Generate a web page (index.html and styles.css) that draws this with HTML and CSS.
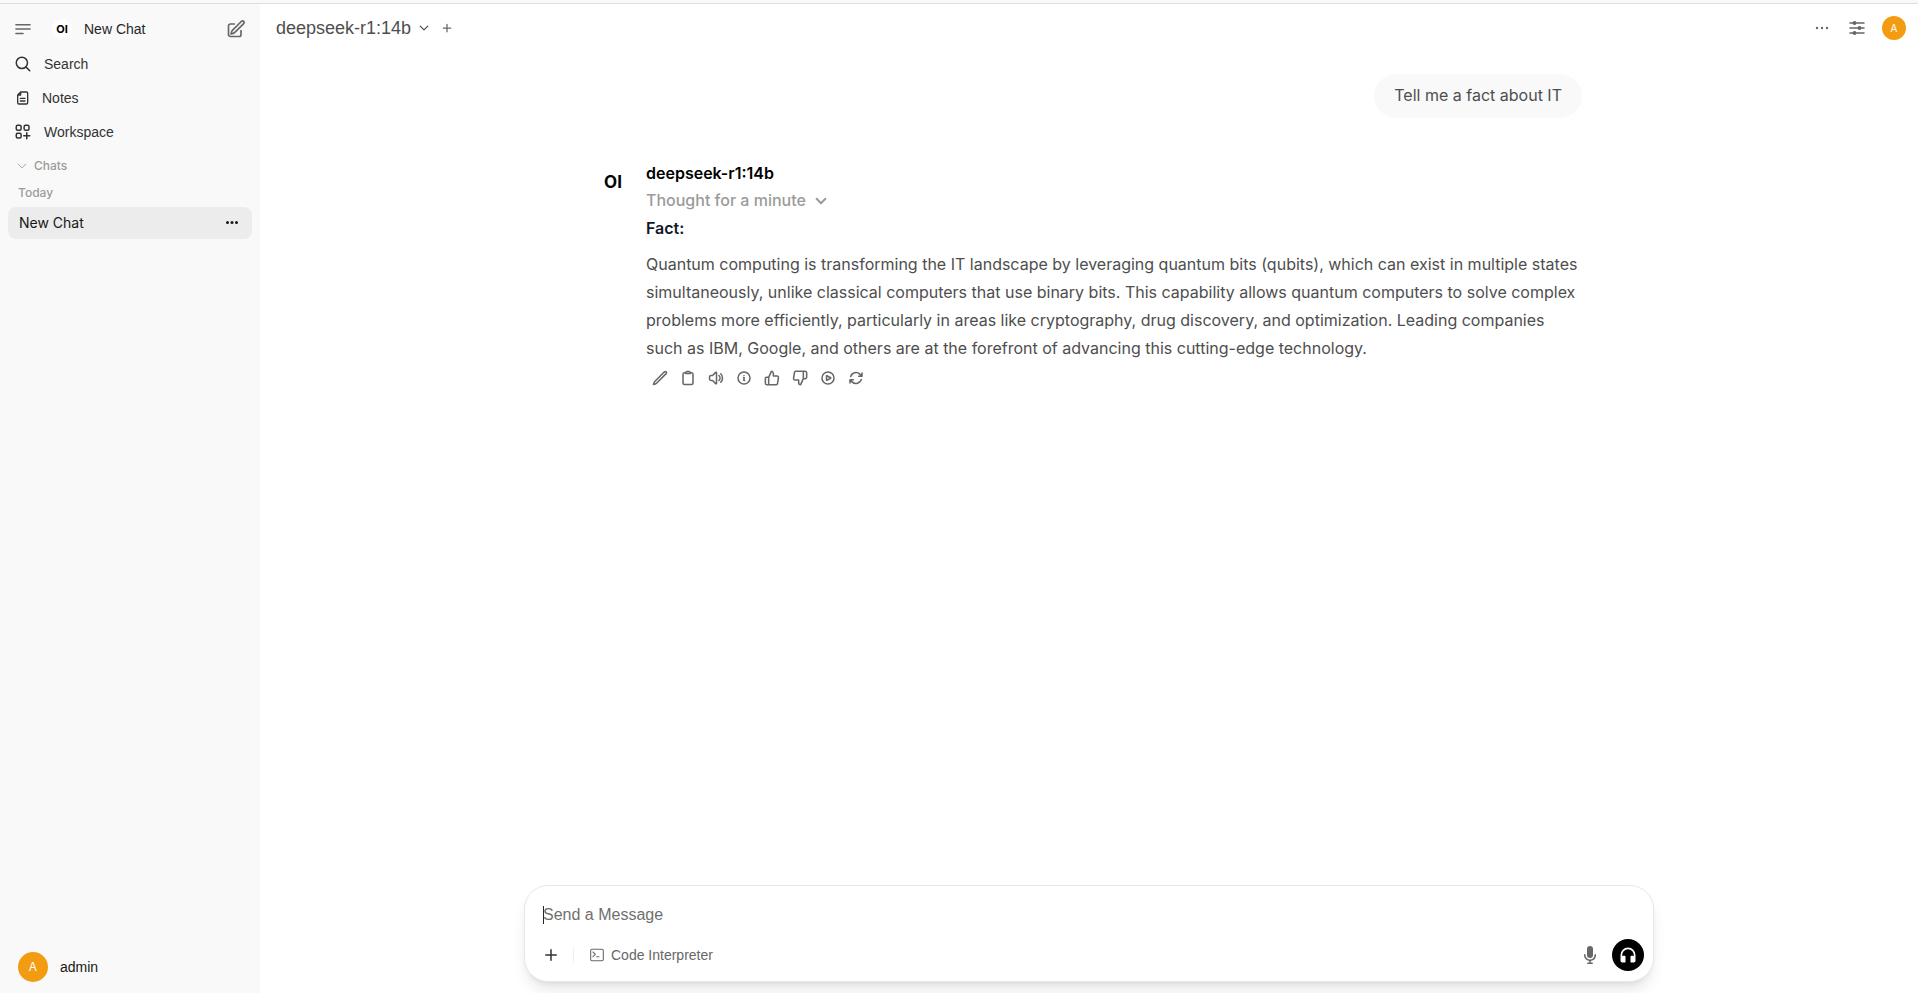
FILE: index.html
```html
<!doctype html>
<html lang="en">
<head>
    <meta charset="UTF-8" />
    <meta name="viewport" content="width=device-width, initial-scale=1">
    <title>New Chat</title>
    <link rel="stylesheet" href="styles.css">
</head>
<body>
<div class="app">
    <aside class="sidebar">
        <div class="side-top">
            <button type="button" class="icon-btn" aria-label="Toggle sidebar">
                <svg class="i20" viewBox="0 0 24 24" stroke-width="1.800"><path d="M3.500 6.750h17M3.500 12h17M3.500 17.250h8.500"/></svg>
            </button>
            <a href="#" class="new-chat">
                <span class="logo logo-small">OI</span>
                <span class="label">New Chat</span>
                <svg class="i20" viewBox="0 0 24 24" stroke-width="2"><path d="M16.862 4.487l1.687-1.688a1.875 1.875 0 112.652 2.652L10.582 16.07a4.5 4.5 0 01-1.897 1.13L6 18l.8-2.685a4.5 4.5 0 011.13-1.897l8.932-8.931zM18 14v4.75A2.25 2.25 0 0115.75 21H5.25A2.25 2.25 0 013 18.75V8.25A2.25 2.25 0 015.25 6H10"/></svg>
            </a>
        </div>
        <nav class="side-nav">
            <button type="button" class="nav-item">
                <svg class="i18" viewBox="0 0 24 24" stroke-width="2"><path d="m21 21-5.197-5.197m0 0A7.5 7.5 0 1 0 5.196 5.196a7.5 7.5 0 0 0 10.607 10.607Z"/></svg>
                Search
            </button>
            <a href="#" class="nav-item">
                <svg class="i16" viewBox="0 0 24 24" stroke-width="2"><path d="M10 3h8.500a2 2 0 0 1 2 2v14a2 2 0 0 1-2 2h-11a2 2 0 0 1-2-2V7.500zM10 3v4.500H5.500M9.500 12.500h7M9.500 16.500h7"/></svg>
                Notes
            </a>
            <a href="#" class="nav-item">
                <svg class="i18" viewBox="0 0 24 24" stroke-width="2"><rect x="3" y="3" width="6.500" height="6.500" rx="2"/><rect x="13.500" y="3" width="6.500" height="6.500" rx="2"/><rect x="3" y="13.500" width="6.500" height="6.500" rx="2"/><path d="M17 13v8M13 17h8"/></svg>
                Workspace
            </a>
        </nav>
        <button type="button" class="folder">
            <svg class="i12" viewBox="0 0 24 24" stroke-width="1.800"><path d="m19.500 8.250-7.500 7.500-7.500-7.500"/></svg>
            Chats
        </button>
        <div class="period">Today</div>
        <div class="chat-item">
            <a href="#">New Chat</a>
            <button type="button" class="icon-btn" aria-label="Chat menu">
                <svg class="i16 solid" viewBox="0 0 16 16"><circle cx="3.500" cy="7.500" r="1.500"/><circle cx="8" cy="7.500" r="1.500"/><circle cx="12.500" cy="7.500" r="1.500"/></svg>
            </button>
        </div>
        <button type="button" class="user">
            <span class="avatar avatar-large">A</span>
            admin
        </button>
    </aside>

    <main class="main">
        <header class="topbar">
            <button type="button" class="model">
                deepseek-r1:14b
                <svg class="i12" viewBox="0 0 24 24" stroke-width="2.500"><path d="m19.500 8.250-7.500 7.500-7.500-7.500"/></svg>
            </button>
            <button type="button" class="icon-btn add-model" aria-label="Add model">
                <svg class="i12" viewBox="0 0 24 24" stroke-width="2.500"><path d="M12 4.500v15M4.500 12h15"/></svg>
            </button>
            <div class="top-actions">
                <button type="button" class="icon-btn" aria-label="More">
                    <svg class="i20 solid" viewBox="0 0 20 20"><circle cx="5" cy="10" r="1.200"/><circle cx="10" cy="10" r="1.200"/><circle cx="15" cy="10" r="1.200"/></svg>
                </button>
                <button type="button" class="icon-btn" aria-label="Controls">
                    <svg class="i20" viewBox="0 0 24 24" stroke-width="1.600"><path d="M3.500 6h17M3.500 12h17M3.500 18h17"/><circle class="knob" cx="9" cy="6" r="1.500"/><circle class="knob" cx="15" cy="12" r="1.500"/><circle class="knob" cx="9" cy="18" r="1.500"/></svg>
                </button>
                <button type="button" class="avatar" aria-label="User menu">A</button>
            </div>
        </header>

        <section class="messages">
            <div class="question">Tell me a fact about IT</div>
            <article class="answer">
                <span class="logo">OI</span>
                <div class="answer-body">
                    <div class="name">deepseek-r1:14b</div>
                    <button type="button" class="thought">
                        Thought for a minute
                        <svg class="i14" viewBox="0 0 24 24" stroke-width="3.500"><path d="m19.500 8.250-7.500 7.500-7.500-7.500"/></svg>
                    </button>
                    <p class="fact"><strong>Fact:</strong></p>
                    <p>Quantum computing is transforming the IT landscape by leveraging quantum bits (qubits), which can exist in multiple states simultaneously, unlike classical computers that use binary bits. This capability allows quantum computers to solve complex problems more efficiently, particularly in areas like cryptography, drug discovery, and optimization. Leading companies such as IBM, Google, and others are at the forefront of advancing this cutting-edge technology.</p>
                    <div class="tools">
                        <button type="button" class="icon-btn" aria-label="Edit">
                            <svg class="i16" viewBox="0 0 24 24" stroke-width="2.300"><path d="M16.862 4.487l1.687-1.688a1.875 1.875 0 112.652 2.652L6.832 19.82a4.5 4.5 0 01-1.897 1.13l-2.685.8.8-2.685a4.5 4.5 0 011.13-1.897L16.863 4.487z"/></svg>
                        </button>
                        <button type="button" class="icon-btn" aria-label="Copy">
                            <svg class="i16" viewBox="0 0 24 24" stroke-width="2.300"><path d="M15.666 3.888A2.25 2.25 0 0013.5 2.25h-3c-1.03 0-1.9.693-2.166 1.638m7.332 0c.055.194.084.4.084.612v0a.75.75 0 01-.75.75H9a.75.75 0 01-.75-.75v0c0-.212.03-.418.084-.612m7.332 0c.646.049 1.288.11 1.927.184 1.1.128 1.907 1.077 1.907 2.185V19.5a2.25 2.25 0 01-2.25 2.25H6.75A2.25 2.25 0 014.5 19.5V6.257c0-1.108.806-2.057 1.907-2.185a48.208 48.208 0 011.927-.184"/></svg>
                        </button>
                        <button type="button" class="icon-btn" aria-label="Read aloud">
                            <svg class="i16" viewBox="0 0 24 24" stroke-width="2.300"><path d="M19.114 5.636a9 9 0 010 12.728M16.463 8.288a5.25 5.25 0 010 7.424M6.75 8.25l4.72-4.72a.75.75 0 011.28.53v15.88a.75.75 0 01-1.28.53l-4.72-4.72H4.51c-.88 0-1.704-.507-1.938-1.354A9.01 9.01 0 012.25 12c0-.83.112-1.633.322-2.396C2.806 8.756 3.63 8.25 4.51 8.25H6.75z"/></svg>
                        </button>
                        <button type="button" class="icon-btn" aria-label="Info">
                            <svg class="i16" viewBox="0 0 24 24" stroke-width="2.300"><path d="M11.25 11.25l.041-.02a.75.75 0 011.063.852l-.708 2.836a.75.75 0 001.063.853l.041-.021M21 12a9 9 0 11-18 0 9 9 0 0118 0zm-9-3.75h.008v.008H12V8.25z"/></svg>
                        </button>
                        <button type="button" class="icon-btn" aria-label="Good response">
                            <svg class="i16" viewBox="0 0 24 24" stroke-width="2.300"><path d="M14 9V5a3 3 0 0 0-3-3l-4 9v11h11.28a2 2 0 0 0 2-1.7l1.38-9a2 2 0 0 0-2-2.300zM7 22H4a2 2 0 0 1-2-2v-7a2 2 0 0 1 2-2h3"/></svg>
                        </button>
                        <button type="button" class="icon-btn" aria-label="Bad response">
                            <svg class="i16" viewBox="0 0 24 24" stroke-width="2.300"><path d="M10 15v4a3 3 0 0 0 3 3l4-9V2H5.720a2 2 0 0 0-2 1.700l-1.380 9a2 2 0 0 0 2 2.300zm7-13h2.670A2.310 2.310 0 0 1 22 4v7a2.310 2.310 0 0 1-2.330 2H17"/></svg>
                        </button>
                        <button type="button" class="icon-btn" aria-label="Continue">
                            <svg class="i16" viewBox="0 0 24 24" stroke-width="2.300"><path d="M21 12a9 9 0 11-18 0 9 9 0 0118 0z"/><path d="M15.910 11.672a.375.375 0 010 .656l-5.603 3.113a.375.375 0 01-.557-.328V8.887c0-.286.307-.466.557-.327l5.603 3.112z"/></svg>
                        </button>
                        <button type="button" class="icon-btn" aria-label="Regenerate">
                            <svg class="i16" viewBox="0 0 24 24" stroke-width="2.300"><path d="M16.023 9.348h4.992v-.001M2.985 19.644v-4.992m0 0h4.992m-4.993 0l3.181 3.183a8.25 8.25 0 0013.803-3.7M4.031 9.865a8.25 8.25 0 0113.803-3.7l3.181 3.182m0-4.991v4.99"/></svg>
                        </button>
                    </div>
                </div>
            </article>
        </section>

        <form class="composer">
            <div class="field">
                <textarea rows="1" placeholder="Send a Message" aria-label="Send a Message"></textarea>
            </div>
            <div class="composer-bar">
                <button type="button" class="icon-btn attach" aria-label="Add">
                    <svg class="i20 solid" viewBox="0 0 20 20"><path d="M10.750 4.750a.75.75 0 0 0-1.500 0v4.500h-4.500a.75.75 0 0 0 0 1.500h4.500v4.500a.75.75 0 0 0 1.500 0v-4.500h4.500a.75.75 0 0 0 0-1.500h-4.500v-4.500Z"/></svg>
                </button>
                <button type="button" class="interpreter">
                    <svg class="i16" viewBox="0 0 24 24" stroke-width="1.600"><rect x="2.500" y="3.500" width="19" height="17" rx="2"/><path d="m6 7.500 3.500 3.500L6 14.500M11.500 14.500h3.500"/></svg>
                    Code Interpreter
                </button>
                <button type="button" class="icon-btn mic" aria-label="Record voice">
                    <svg class="i20 solid" viewBox="0 0 20 20"><path d="M7 4a3 3 0 016 0v6a3 3 0 11-6 0V4z"/><path d="M5.500 9.643a.75.75 0 00-1.500 0V10c0 3.060 2.290 5.585 5.250 5.954V17.500h-1.500a.75.75 0 000 1.500h4.500a.75.75 0 000-1.500h-1.500v-1.546A6.001 6.001 0 0016 10v-.357a.75.75 0 00-1.500 0V10a4.500 4.500 0 01-9 0v-.357z"/></svg>
                </button>
                <button type="button" class="call" aria-label="Call">
                    <svg class="i20 solid" viewBox="0 0 24 24"><path d="M12 5a7 7 0 0 0-7 7v1.170c.313-.11.65-.17 1-.17h2a1 1 0 0 1 1 1v6a1 1 0 0 1-1 1H5a2 2 0 0 1-2-2v-7a9 9 0 0 1 18 0v7a2 2 0 0 1-2 2h-3a1 1 0 0 1-1-1v-6a1 1 0 0 1 1-1h2c.35 0 .687.060 1 .170V12a7 7 0 0 0-7-7Z"/></svg>
                </button>
            </div>
        </form>
    </main>
</div>
</body>
</html>
```
FILE: styles.css
```css
*{
    box-sizing: border-box;
}
body{
    margin: 0;
    font: 14px/20px "Liberation Sans", Arial, sans-serif;
    color: #4e4e4e;
    background: #fff;
}
a{
    color: inherit;
    text-decoration: none;
}
button{
    margin: 0;
    padding: 0;
    border: 0;
    background: none;
    font: inherit;
    color: inherit;
    cursor: pointer;
}
p{
    margin: 0;
}
svg{
    display: block;
    flex: none;
    fill: none;
    stroke: currentColor;
    stroke-linecap: round;
    stroke-linejoin: round;
}
svg.solid,
.knob{
    fill: currentColor;
}
svg.solid{
    stroke: none;
}
.i12{ width: 12px; height: 12px; }
.i14{ width: 14px; height: 14px; }
.i16{ width: 16px; height: 16px; }
.i18{ width: 18px; height: 18px; }
.i20{ width: 20px; height: 20px; }

.app{
    display: flex;
    min-height: 100vh;
    padding-top: 3px;
    background: #f9f9f9;
}
.icon-btn{
    display: flex;
    align-items: center;
    justify-content: center;
    color: #676767;
}
.logo{
    flex: none;
    display: flex;
    align-items: center;
    justify-content: center;
    width: 34px;
    height: 34px;
    border-radius: 50%;
    background: #fff;
    color: #000;
    font: 700 17px/20px Inter, sans-serif;
}
.logo-small{
    width: 20px;
    height: 20px;
    font-size: 11px;
}
.avatar{
    flex: none;
    display: flex;
    align-items: center;
    justify-content: center;
    width: 24px;
    height: 24px;
    border-radius: 50%;
    background: #f39c12;
    color: #fff;
    font: 10px/12px Inter, sans-serif;
}
.avatar-large{
    width: 30px;
    height: 30px;
    font-size: 12px;
}

/* sidebar */
.sidebar{
    flex: none;
    display: flex;
    flex-direction: column;
    width: 260px;
    padding: 9px 8px 11px;
    border-top: 1px solid #ddd;
    color: #333;
}
.side-top{
    display: flex;
    align-items: center;
    height: 32px;
    padding: 0 6px 0 5px;
}
.new-chat{
    flex: 1;
    display: flex;
    align-items: center;
    margin-left: 19px;
    color: #676767;
}
.new-chat .label{
    flex: 1;
    margin-left: 12px;
    color: #262626;
}
.side-nav{
    padding-top: 1px;
}
.nav-item{
    display: flex;
    align-items: center;
    gap: 12px;
    width: 100%;
    height: 34px;
    padding: 2px 6px 0;
    text-align: left;
}
.folder{
    display: flex;
    align-items: center;
    gap: 6px;
    height: 28px;
    margin-top: 4px;
    padding: 0 8px;
    color: #9b9b9b;
    font: 500 12px/16px Inter, sans-serif;
}
.period{
    padding: 5px 10px 6px;
    color: #9b9b9b;
    font: 500 12px/16px Inter, sans-serif;
}
.chat-item{
    display: flex;
    align-items: center;
    justify-content: space-between;
    height: 32px;
    padding: 0 12px 0 11px;
    border-radius: 8px;
    background: #ececec;
    color: #171717;
    font-family: Inter, sans-serif;
}
.chat-item .icon-btn{
    color: #171717;
}
.user{
    display: flex;
    align-items: center;
    gap: 12px;
    margin-top: auto;
    padding: 0 10px;
    color: #171717;
}

/* chat */
.main{
    flex: 1;
    min-width: 0;
    display: flex;
    flex-direction: column;
    border-top: 1px solid #ddd;
    background: #fff;
}
.topbar{
    display: flex;
    align-items: center;
    height: 48px;
    padding: 0 12px 0 16px;
}
.model{
    display: flex;
    align-items: center;
    gap: 7px;
    font-size: 18px;
    line-height: 28px;
}
.add-model{
    margin-left: 11px;
}
.top-actions{
    display: flex;
    align-items: center;
    gap: 15px;
    margin-left: auto;
}
.messages{
    flex: 1;
    display: flex;
    flex-direction: column;
    width: 100%;
    max-width: 1024px;
    margin: 0 auto;
    padding: 22px 19px;
    font: 16px/28px Inter, sans-serif;
}
.question{
    align-self: flex-end;
    padding: 7px 20px 9px;
    border-radius: 24px;
    background: #f9f9f9;
}
.answer{
    display: flex;
    gap: 16px;
    margin-top: 41px;
}
.answer .logo{
    margin-top: 6px;
}
.answer-body{
    flex: 1;
    min-width: 0;
}
.name{
    color: #000;
    font-weight: 600;
}
.thought{
    display: flex;
    align-items: center;
    gap: 8px;
    line-height: 27px;
    color: #9b9b9b;
    font-weight: 500;
}
.fact{
    margin-bottom: 8px;
    color: #111827;
}
.fact strong{
    font-weight: 600;
}
.tools{
    display: flex;
    gap: 12px;
    margin-top: 8px;
    padding-left: 6px;
}

/* message box */
.composer{
    width: calc(100% - 20px);
    max-width: 1130px;
    margin: 0 auto 11px;
    padding: 10px 9px 10px 10px;
    border: 1px solid #e8e8e8;
    border-radius: 24px;
    background: #fff;
    box-shadow: 0 10px 15px -3px rgba(0,0,0,.1), 0 4px 6px -4px rgba(0,0,0,.1);
}
.field{
    position: relative;
    padding: 7px 8px 6px;
}
/* text cursor */
.field::before{
    content: "";
    position: absolute;
    top: 10px;
    left: 8px;
    width: 1px;
    height: 18px;
    background: #262626;
}
.field textarea{
    display: block;
    width: 100%;
    height: 24px;
    padding: 0;
    border: 0;
    outline: 0;
    resize: none;
    background: none;
    color: #262626;
    font: 16px/24px "Liberation Sans", Arial, sans-serif;
}
.field textarea::placeholder{
    color: #6f6f6f;
}
.composer-bar{
    display: flex;
    align-items: center;
    margin-top: 6px;
    color: #676767;
}
.attach{
    padding: 0 12px 0 6px;
    color: #333;
}
.interpreter{
    display: flex;
    align-items: center;
    gap: 6px;
    padding-left: 16px;
    background: linear-gradient(#f0f0f0, #f0f0f0) left / 1px 16px no-repeat;
}
.mic{
    margin-left: auto;
}
.call{
    display: flex;
    align-items: center;
    justify-content: center;
    width: 32px;
    height: 32px;
    margin-left: 12px;
    border-radius: 50%;
    background: #000;
    color: #fff;
}
```
